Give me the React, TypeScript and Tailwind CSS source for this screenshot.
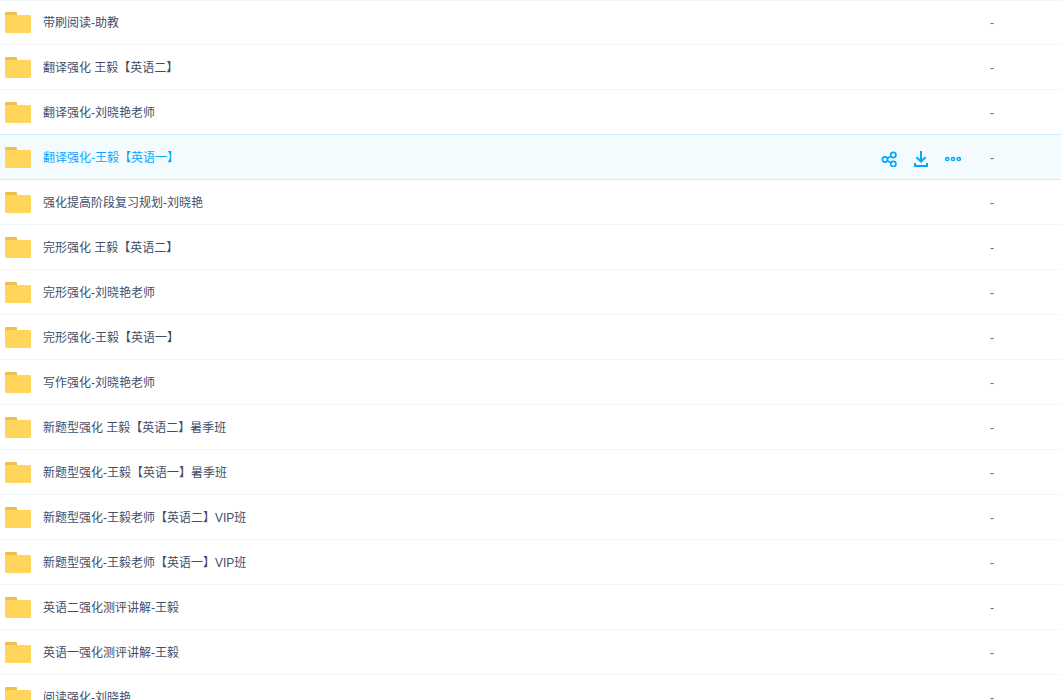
import React from "react";
import clsx from "clsx";

interface FileRow {
  name: string;
  size: string;
  active?: boolean;
}

const files: FileRow[] = [
  { name: "带刷阅读-助教", size: "-" },
  { name: "翻译强化 王毅【英语二】", size: "-" },
  { name: "翻译强化-刘晓艳老师", size: "-" },
  { name: "翻译强化-王毅【英语一】", size: "-", active: true },
  { name: "强化提高阶段复习规划-刘晓艳", size: "-" },
  { name: "完形强化 王毅【英语二】", size: "-" },
  { name: "完形强化-刘晓艳老师", size: "-" },
  { name: "完形强化-王毅【英语一】", size: "-" },
  { name: "写作强化-刘晓艳老师", size: "-" },
  { name: "新题型强化 王毅【英语二】暑季班", size: "-" },
  { name: "新题型强化-王毅【英语一】暑季班", size: "-" },
  { name: "新题型强化-王毅老师【英语二】VIP班", size: "-" },
  { name: "新题型强化-王毅老师【英语一】VIP班", size: "-" },
  { name: "英语二强化测评讲解-王毅", size: "-" },
  { name: "英语一强化测评讲解-王毅", size: "-" },
  { name: "阅读强化-刘晓艳", size: "-" },
];

function FolderIcon() {
  return (
    <svg className="h-[22px] w-[26px] shrink-0" viewBox="0 0 26 22" aria-hidden="true">
      <path d="M0 6V2.2Q0 1 1.2 1H10.8Q12 1 12 2.2V6Z" fill="#eebf4b" />
      <path d="M0 4H24.8Q26 4 26 5.2V20.5Q26 22 24.5 22H1.5Q0 22 0 20.5Z" fill="#ffd55b" />
    </svg>
  );
}

function ShareIcon() {
  return (
    <svg className="size-4" viewBox="0 0 16 16" fill="none" stroke="currentColor" strokeWidth="1.7" aria-hidden="true">
      <circle cx="4" cy="8.5" r="2.6" />
      <circle cx="12.3" cy="4" r="2.6" />
      <circle cx="12.3" cy="13" r="2.6" />
      <path d="M6.3 7.3 9.9 5.3M6.3 9.7 9.9 11.8" />
    </svg>
  );
}

function DownloadIcon() {
  return (
    <svg className="size-4" viewBox="0 0 16 16" fill="none" stroke="currentColor" strokeWidth="2" aria-hidden="true">
      <path d="M8 0V10.5M3.5 6.2 8 10.7 12.5 6.2M2 12V15H14V12" />
    </svg>
  );
}

function MoreIcon() {
  return (
    <svg className="size-4" viewBox="0 0 16 16" fill="none" stroke="currentColor" strokeWidth="1.5" aria-hidden="true">
      <circle cx="2.3" cy="8" r="1.6" />
      <circle cx="8" cy="8" r="1.6" />
      <circle cx="13.7" cy="8" r="1.6" />
    </svg>
  );
}

function RowActions() {
  return (
    <div className="flex gap-4 pt-1 text-[#06a7ff]">
      <button type="button" aria-label="分享">
        <ShareIcon />
      </button>
      <button type="button" aria-label="下载">
        <DownloadIcon />
      </button>
      <button type="button" aria-label="更多">
        <MoreIcon />
      </button>
    </div>
  );
}

export default function App() {
  return (
    <main className="h-screen overflow-hidden bg-white font-['Liberation_Sans','Noto_Sans_CJK_SC',sans-serif] text-xs text-[#424e67]">
      <table className="w-full table-fixed border-separate border-spacing-0">
        <colgroup>
          <col />
          <col className="w-[109px]" />
          <col className="w-[71px]" />
        </colgroup>
        <tbody>
          {files.map((file, i) => {
            const cell = clsx(
              "h-[45px] border-b p-0",
              i === 0 && "shadow-[inset_0_1px_#f1f6fd]",
              file.active || files[i + 1]?.active ? "border-[#d6e8fa]" : "border-[#f1f6fd]"
            );
            return (
              <tr key={file.name} className={clsx(file.active && "bg-[#f3fbff]")}>
                <td className={cell}>
                  <div className="flex items-center gap-3 pl-[5px]">
                    <FolderIcon />
                    <a href="#" className={clsx("truncate pt-0.5 leading-4", file.active && "text-[#06a7ff]")}>
                      {file.name}
                    </a>
                  </div>
                </td>
                <td className={cell}>{file.active && <RowActions />}</td>
                <td className={clsx(cell, "text-[#666666]")}>
                  <div className="pt-0.5 leading-4">{file.size}</div>
                </td>
              </tr>
            );
          })}
        </tbody>
      </table>
    </main>
  );
}
